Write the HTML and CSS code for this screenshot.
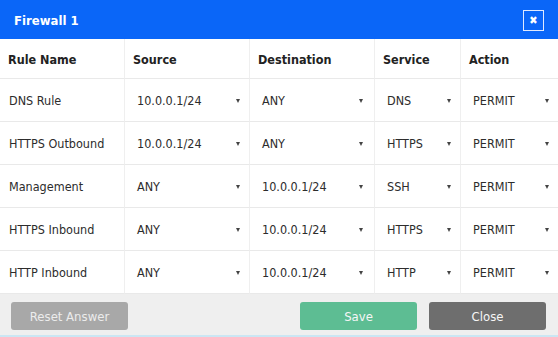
FILE: index.html
```html
<!DOCTYPE html>
<html>
<head>
<meta charset="utf-8">
<link rel="stylesheet" href="styles.css">
</head>
<body>
<div class="dialog">
  <div class="titlebar">
    <span class="title">Firewall 1</span>
    <span class="close-x">&#x2716;</span>
  </div>
  <div class="grid">
    <div class="hd">Rule Name</div><div class="hd">Source</div><div class="hd">Destination</div><div class="hd">Service</div><div class="hd">Action</div>

    <div class="c name">DNS Rule</div>
    <div class="c sel"><span>10.0.0.1/24</span><i class="arr"></i></div>
    <div class="c sel d"><span>ANY</span><i class="arr"></i></div>
    <div class="c sel"><span>DNS</span><i class="arr"></i></div>
    <div class="c sel"><span>PERMIT</span><i class="arr"></i></div>

    <div class="c name">HTTPS Outbound</div>
    <div class="c sel"><span>10.0.0.1/24</span><i class="arr"></i></div>
    <div class="c sel d"><span>ANY</span><i class="arr"></i></div>
    <div class="c sel"><span>HTTPS</span><i class="arr"></i></div>
    <div class="c sel"><span>PERMIT</span><i class="arr"></i></div>

    <div class="c name">Management</div>
    <div class="c sel"><span>ANY</span><i class="arr"></i></div>
    <div class="c sel d"><span>10.0.0.1/24</span><i class="arr"></i></div>
    <div class="c sel"><span>SSH</span><i class="arr"></i></div>
    <div class="c sel"><span>PERMIT</span><i class="arr"></i></div>

    <div class="c name">HTTPS Inbound</div>
    <div class="c sel"><span>ANY</span><i class="arr"></i></div>
    <div class="c sel d"><span>10.0.0.1/24</span><i class="arr"></i></div>
    <div class="c sel"><span>HTTPS</span><i class="arr"></i></div>
    <div class="c sel"><span>PERMIT</span><i class="arr"></i></div>

    <div class="c name">HTTP Inbound</div>
    <div class="c sel"><span>ANY</span><i class="arr"></i></div>
    <div class="c sel d"><span>10.0.0.1/24</span><i class="arr"></i></div>
    <div class="c sel"><span>HTTP</span><i class="arr"></i></div>
    <div class="c sel"><span>PERMIT</span><i class="arr"></i></div>
  </div>
  <div class="footer">
    <button class="btn reset">Reset Answer</button>
    <div class="spacer"></div>
    <button class="btn save">Save</button>
    <button class="btn close">Close</button>
  </div>
</div>
</body>
</html>
```
FILE: styles.css
```css
html, body {
  margin: 0;
  padding: 0;
  background: #fff;
}
body {
  font-family: "DejaVu Sans Condensed", "DejaVu Sans", sans-serif;
  font-size: 12.5px;
  color: #2c2c2c;
}
.dialog {
  width: 558px;
  height: 337px;
  display: flex;
  flex-direction: column;
  overflow: hidden;
}
.titlebar {
  height: 39px;
  background: #0a66f8;
  display: flex;
  align-items: center;
  justify-content: space-between;
  padding: 0 14px 0 14px;
  box-sizing: border-box;
  flex: none;
}
.title {
  color: #fff;
  font-weight: bold;
  font-size: 13px;
  margin-top: 2px;
}
.close-x {
  width: 21px;
  height: 21px;
  box-sizing: border-box;
  border: 1px solid #dfe9ff;
  color: #fff;
  font-size: 11px;
  font-weight: bold;
  display: flex;
  align-items: center;
  justify-content: center;
  margin-top: 2px;
}
.grid {
  display: grid;
  grid-template-columns: 124px 125px 125px 86px 98px;
  grid-template-rows: 40px repeat(5, 43px);
  flex: none;
}
.hd, .c {
  border-bottom: 1px solid #e9e9e9;
  border-left: 1px solid #efefef;
  box-sizing: border-box;
  display: flex;
  align-items: center;
}
.hd:nth-child(5n+1), .c.name {
  border-left: none;
}
.hd {
  font-weight: bold;
  color: #222;
  padding-left: 8px;
  padding-top: 1px;
}
.c.name {
  padding-left: 9px;
}
.sel {
  padding-left: 12px;
  padding-right: 9px;
  justify-content: space-between;
}
.sel.d {
  padding-right: 11px;
}
.arr {
  width: 0;
  height: 0;
  border-left: 2px solid transparent;
  border-right: 2px solid transparent;
  border-top: 4px solid #444;
  margin-top: 1px;
}
.footer {
  flex: 1;
  background: #efefef;
  display: flex;
  align-items: flex-start;
  padding: 8px 12px 0 11px;
  gap: 12px;
  border-bottom: 2px solid #cbe6f3;
}
.spacer {
  flex: 1;
}
.btn {
  width: 117px;
  height: 28px;
  border: none;
  border-radius: 3px;
  font-family: "DejaVu Sans Condensed", "DejaVu Sans", sans-serif;
  font-size: 13px;
  color: #f6f6f6;
  padding: 0;
}
.reset {
  background: #a8a8a8;
  color: #ececec;
}
.save {
  background: #5dbd93;
}
.close {
  background: #6e6e6e;
}
```
